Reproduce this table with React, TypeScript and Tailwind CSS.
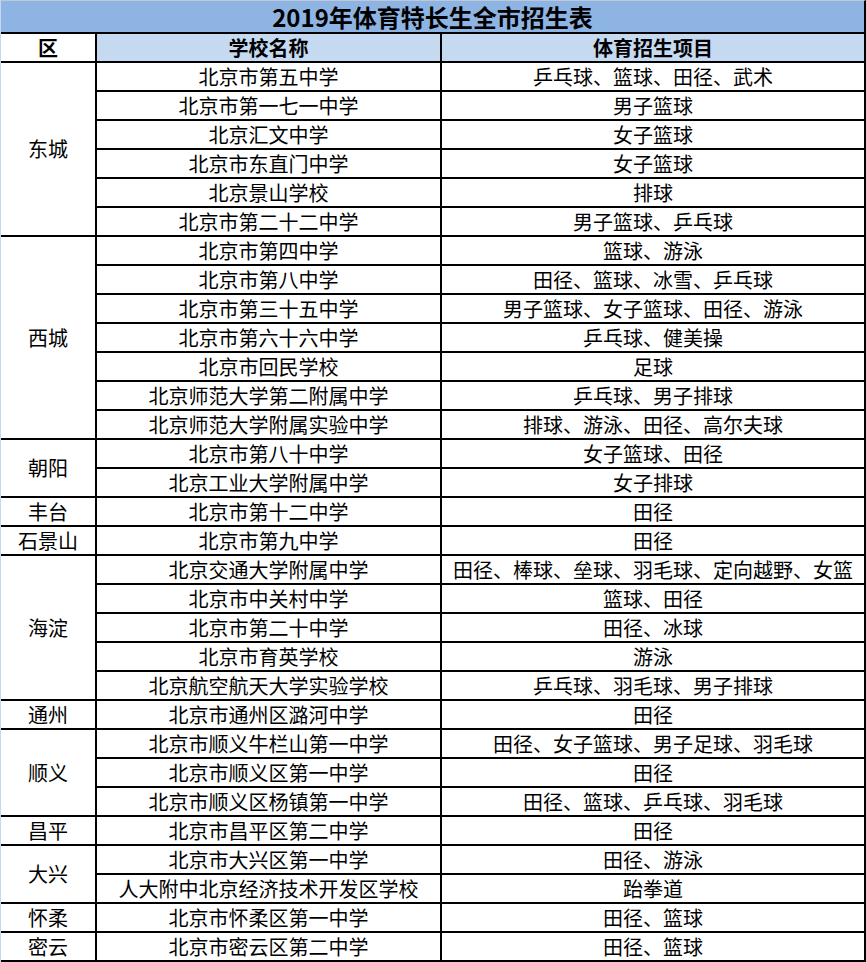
import React from "react";

type Group = { d: string; rows: [string, string][] };

const data: Group[] = [
  {
    d: "东城",
    rows: [
      ["北京市第五中学", "乒乓球、篮球、田径、武术"],
      ["北京市第一七一中学", "男子篮球"],
      ["北京汇文中学", "女子篮球"],
      ["北京市东直门中学", "女子篮球"],
      ["北京景山学校", "排球"],
      ["北京市第二十二中学", "男子篮球、乒乓球"],
    ],
  },
  {
    d: "西城",
    rows: [
      ["北京市第四中学", "篮球、游泳"],
      ["北京市第八中学", "田径、篮球、冰雪、乒乓球"],
      ["北京市第三十五中学", "男子篮球、女子篮球、田径、游泳"],
      ["北京市第六十六中学", "乒乓球、健美操"],
      ["北京市回民学校", "足球"],
      ["北京师范大学第二附属中学", "乒乓球、男子排球"],
      ["北京师范大学附属实验中学", "排球、游泳、田径、高尔夫球"],
    ],
  },
  {
    d: "朝阳",
    rows: [
      ["北京市第八十中学", "女子篮球、田径"],
      ["北京工业大学附属中学", "女子排球"],
    ],
  },
  { d: "丰台", rows: [["北京市第十二中学", "田径"]] },
  { d: "石景山", rows: [["北京市第九中学", "田径"]] },
  {
    d: "海淀",
    rows: [
      ["北京交通大学附属中学", "田径、棒球、垒球、羽毛球、定向越野、女篮"],
      ["北京市中关村中学", "篮球、田径"],
      ["北京市第二十中学", "田径、冰球"],
      ["北京市育英学校", "游泳"],
      ["北京航空航天大学实验学校", "乒乓球、羽毛球、男子排球"],
    ],
  },
  { d: "通州", rows: [["北京市通州区潞河中学", "田径"]] },
  {
    d: "顺义",
    rows: [
      ["北京市顺义牛栏山第一中学", "田径、女子篮球、男子足球、羽毛球"],
      ["北京市顺义区第一中学", "田径"],
      ["北京市顺义区杨镇第一中学", "田径、篮球、乒乓球、羽毛球"],
    ],
  },
  { d: "昌平", rows: [["北京市昌平区第二中学", "田径"]] },
  {
    d: "大兴",
    rows: [
      ["北京市大兴区第一中学", "田径、游泳"],
      ["人大附中北京经济技术开发区学校", "跆拳道"],
    ],
  },
  { d: "怀柔", rows: [["北京市怀柔区第一中学", "田径、篮球"]] },
  { d: "密云", rows: [["北京市密云区第二中学", "田径、篮球"]] },
];

const span: Record<number, string> = {
  1: "row-span-1",
  2: "row-span-2",
  3: "row-span-3",
  5: "row-span-5",
  6: "row-span-6",
  7: "row-span-7",
};

const cell =
  "flex items-center justify-center border-r-2 border-b-2 border-black whitespace-nowrap overflow-hidden";

export default function App() {
  return (
    <div className="w-[866px] h-[962px] bg-white text-black font-['Noto_Sans_CJK_SC',sans-serif]">
      <div className="w-[866px] border-l border-[#c9d7ea]">
        <div className="h-[34px] flex items-center justify-center bg-[#8db4e2] border-t border-[#bfc8d4] border-b-2 border-b-black border-r-2 border-r-black text-[24px] font-bold leading-none">
          2019年体育特长生全市招生表
        </div>
        <div className="grid grid-cols-[96px_345px_424px] auto-rows-[29px] text-[20px] leading-none">
          <div className={`${cell} bg-white font-bold text-[20px]`}>区</div>
          <div className={`${cell} bg-[#c5d9f1] font-bold text-[20px]`}>学校名称</div>
          <div className={`${cell} bg-[#c5d9f1] font-bold text-[20px]`}>体育招生项目</div>
          {data.map((g) => (
            <React.Fragment key={g.d}>
              <div className={`${cell} col-start-1 ${span[g.rows.length]}`}>{g.d}</div>
              {g.rows.map(([s, p]) => (
                <React.Fragment key={s}>
                  <div className={`${cell} col-start-2`}>{s}</div>
                  <div className={`${cell} col-start-3`}>{p}</div>
                </React.Fragment>
              ))}
            </React.Fragment>
          ))}
        </div>
      </div>
    </div>
  );
}
